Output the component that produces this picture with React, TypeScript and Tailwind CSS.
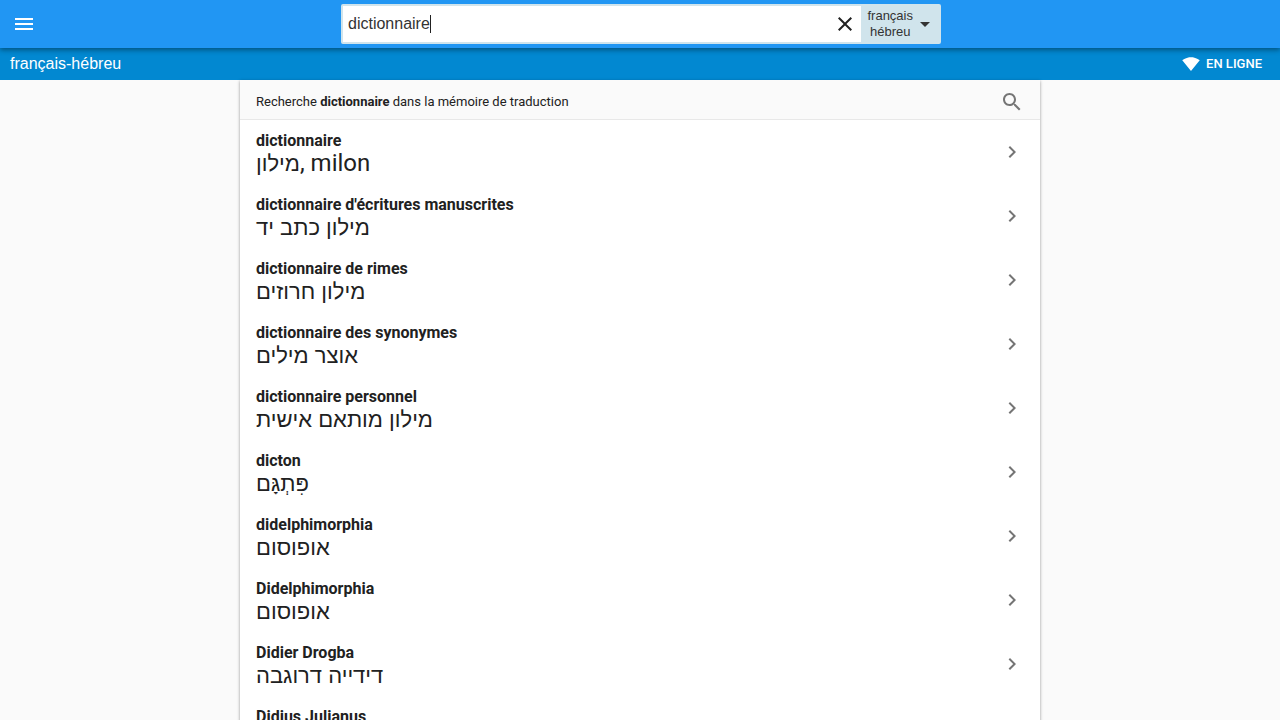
import { useEffect, useRef, useState } from "react";

type Entry = {
  term: string;
  translation: string;
  romanized?: string;
};

const entries: Entry[] = [
  { term: "dictionnaire", translation: "מילון", romanized: "milon" },
  { term: "dictionnaire d'écritures manuscrites", translation: "מילון כתב יד" },
  { term: "dictionnaire de rimes", translation: "מילון חרוזים" },
  { term: "dictionnaire des synonymes", translation: "אוצר מילים" },
  { term: "dictionnaire personnel", translation: "מילון מותאם אישית" },
  { term: "dicton", translation: "פִּתְגָּם" },
  { term: "didelphimorphia", translation: "אופוסום" },
  { term: "Didelphimorphia", translation: "אופוסום" },
  { term: "Didier Drogba", translation: "דידייה דרוגבה" },
  { term: "Didius Julianus", translation: "דידיוס יוליאנוס" },
];

const icons = {
  menu: "M3 18h18v-2H3v2zm0-5h18v-2H3v2zm0-7v2h18V6H3z",
  close:
    "M19 6.41L17.59 5 12 10.59 6.41 5 5 6.41 10.59 12 5 17.59 6.41 19 12 13.41 17.59 19 19 17.59 13.41 12z",
  dropDown: "M7 10l5 5 5-5z",
  search:
    "M15.5 14h-.79l-.28-.27C15.41 12.59 16 11.11 16 9.5 16 5.91 13.09 3 9.5 3S3 5.91 3 9.5 5.91 16 9.5 16c1.61 0 3.09-.59 4.23-1.57l.27.28v.79l5 4.99L20.49 19l-4.99-5zm-6 0C7.01 14 5 11.99 5 9.5S7.01 5 9.5 5 14 7.01 14 9.5 11.99 14 9.5 14z",
  chevron: "M10 6L8.59 7.41 13.17 12l-4.58 4.59L10 18l6-6z",
  wifi: "M12.01 21.49L23.64 7c-.45-.34-4.93-4-11.64-4C5.28 3 .81 6.66.36 7l11.63 14.49.01.01.01-.01z",
};

function Icon({ name, className }: { name: keyof typeof icons; className?: string }) {
  return (
    <svg viewBox="0 0 24 24" fill="currentColor" aria-hidden="true" className={className}>
      <path d={icons[name]} />
    </svg>
  );
}

function EntryRow({ term, translation, romanized }: Entry) {
  return (
    <li>
      <a href="#" className="flex h-16 items-center justify-between px-4">
        <div className="pt-0.5">
          <div className="text-base leading-5 font-bold">{term}</div>
          <div className="text-2xl leading-6">
            <span lang="he" className="font-['Liberation_Sans',sans-serif] text-[22px] leading-6">
              {translation}
            </span>
            {romanized && <span>, {romanized}</span>}
          </div>
        </div>
        <Icon name="chevron" className="size-6 shrink-0 text-[#757575]" />
      </a>
    </li>
  );
}

export default function App() {
  const [query, setQuery] = useState("dictionnaire");
  const inputRef = useRef<HTMLInputElement>(null);

  useEffect(() => {
    const input = inputRef.current;
    if (!input) return;
    input.focus();
    input.setSelectionRange(input.value.length, input.value.length);
  }, []);

  return (
    <div className="h-screen overflow-y-auto bg-[#fafafa] font-['Roboto',sans-serif] text-[#212121] [scrollbar-width:none]">
      <header className="relative z-10 flex h-12 items-center justify-center bg-[#2196f3] pl-0.5 shadow-[0_2px_5px_rgba(0,0,0,0.4)]">
        <button type="button" aria-label="Menu" className="absolute left-3 text-white">
          <Icon name="menu" className="size-6" />
        </button>
        <form
          className="flex h-10 w-full max-w-[600px] overflow-hidden rounded-xs border-2 border-[#d0e4ec] bg-white font-['Liberation_Sans',sans-serif] text-[#333333]"
          onSubmit={(e) => e.preventDefault()}
        >
          <div className="relative flex min-w-0 flex-1">
            <input
              ref={inputRef}
              type="text"
              aria-label="Recherche"
              value={query}
              onChange={(e) => setQuery(e.target.value)}
              className="min-w-0 flex-1 px-[5px] text-base caret-transparent outline-none"
            />
            <div aria-hidden="true" className="pointer-events-none absolute inset-y-0 left-[5px] flex items-center text-base">
              <span className="invisible whitespace-pre">{query}</span>
              <span className="h-[18px] w-px bg-[#212121]" />
            </div>
          </div>
          <button type="button" aria-label="Effacer" onClick={() => setQuery("")} className="px-1 text-[#212121]">
            <Icon name="close" className="size-6" />
          </button>
          <button
            type="button"
            className="flex items-center bg-[#d0e4ec] pr-0.5 pl-1.5 text-[13px] leading-4"
          >
            <span className="text-center">
              français
              <br />
              hébreu
            </span>
            <Icon name="dropDown" className="size-6" />
          </button>
        </form>
      </header>
      <div className="flex h-8 items-center justify-between bg-[#0288d1] pr-[18px] pl-[10px] text-white">
        <h1 className="font-['Liberation_Sans',sans-serif] text-base">français-hébreu</h1>
        <div className="flex items-center gap-1.5 text-[13px] font-medium">
          <Icon name="wifi" className="size-[18px]" />
          EN LIGNE
        </div>
      </div>
      <main className="mx-auto max-w-[800px] bg-white shadow-[0_1px_3px_rgba(0,0,0,0.4)]">
        <a
          href="#"
          className="flex h-10 items-center justify-between border-b border-[#e8e8e8] bg-[#fafafa] px-4 pt-1 text-[13px]"
        >
          <span>
            Recherche <b>{query}</b> dans la mémoire de traduction
          </span>
          <Icon name="search" className="size-6 text-[#757575]" />
        </a>
        <ul>
          {entries.map((entry) => (
            <EntryRow key={entry.term} {...entry} />
          ))}
        </ul>
      </main>
    </div>
  );
}
